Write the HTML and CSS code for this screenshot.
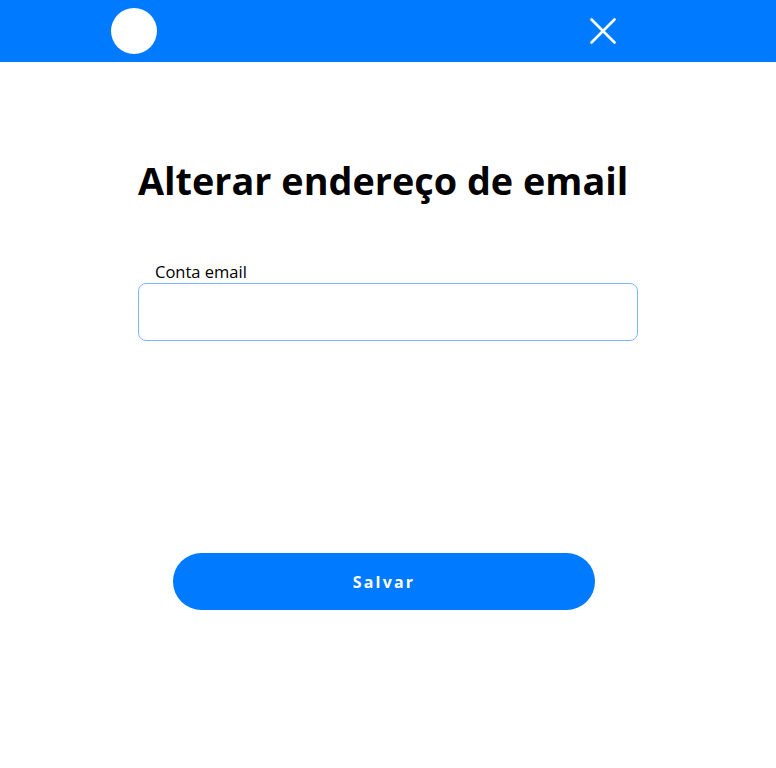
FILE: index.html
```html
<!DOCTYPE html>
<html lang="pt">
<head>
<meta charset="utf-8">
<title>Alterar endereço de email</title>
<link rel="stylesheet" href="styles.css">
</head>
<body>
<header class="topbar">
  <div class="avatar"></div>
  <button class="close" aria-label="Fechar">
    <svg width="26" height="26" viewBox="0 0 26 26"><path d="M1.5 1.5 L24.5 24.5 M24.5 1.5 L1.5 24.5" stroke="#fff" stroke-width="2.6" stroke-linecap="round" fill="none"/></svg>
  </button>
</header>
<main class="content">
  <h1 class="title">Alterar endereço de email</h1>
  <div class="field">
    <label class="label" for="email">Conta email</label>
    <input class="input" id="email" type="email">
  </div>
  <button class="save">Salvar</button>
</main>
</body>
</html>
```
FILE: styles.css
```css
* { box-sizing: border-box; }
body {
  margin: 0;
  font-family: "Open Sans", "Noto Sans", sans-serif;
  background: #fff;
  color: #000;
}
.topbar {
  height: 62px;
  background: #007aff;
  display: flex;
  align-items: center;
  justify-content: space-between;
  padding: 0 160px 0 111px;
}
.avatar {
  width: 46px;
  height: 46px;
  border-radius: 50%;
  background: #fff;
}
.close {
  background: none;
  border: 0;
  padding: 0;
  width: 26px;
  height: 26px;
  display: flex;
}
.content {
  width: 500px;
  margin: 0 auto 0 138px;
  display: flex;
  flex-direction: column;
}
.title {
  margin: 92px 0 0;
  font-size: 37.8px;
  font-weight: 700;
  line-height: 54px;
  white-space: nowrap;
}
.field {
  margin-top: 53px;
  display: flex;
  flex-direction: column;
}
.label {
  font-size: 16.5px;
  line-height: 22px;
  padding-left: 17px;
}
.input {
  height: 58px;
  border: 1px solid #7ab6ff;
  border-radius: 8px;
  font: inherit;
}
.save {
  margin: 212px 0 0 35px;
  width: 422px;
  height: 57px;
  border: 0;
  border-radius: 29px;
  background: #007aff;
  color: #fff;
  font-family: "Open Sans", sans-serif;
  font-weight: 700;
  font-size: 16px;
  letter-spacing: 2.2px;
}
```
